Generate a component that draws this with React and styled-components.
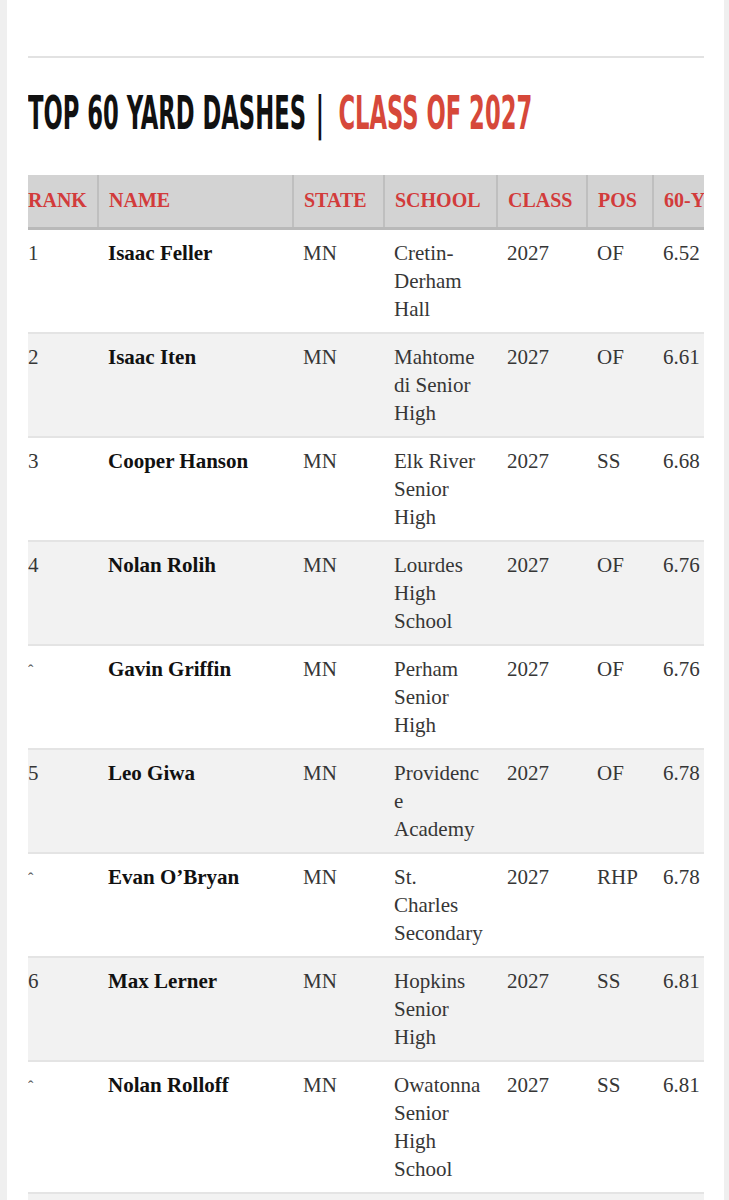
import styled, { createGlobalStyle } from "styled-components";

const GlobalStyle = createGlobalStyle`
  html, body {
    margin: 0;
    padding: 0;
    background: #efefef;
  }
  body {
    font-family: "Liberation Serif", "DejaVu Serif", serif;
  }
`;

const Page = styled.div`
  display: flex;
  padding: 0 5px 0 7px;
  min-height: 1200px;
`;

const Card = styled.main`
  flex: 1;
  background: #ffffff;
  padding: 56px 20px 0 21px;
  overflow: hidden;
`;

const Rule = styled.hr`
  margin: 0;
  border: none;
  height: 2px;
  background: #e2e2e2;
`;

const Title = styled.h2`
  margin: 32px 0 39px;
  font-family: "Liberation Sans Narrow", "DejaVu Sans Condensed", "Liberation Sans", sans-serif;
  font-weight: 700;
  font-size: 46px;
  line-height: 46px;
  color: #111111;
  white-space: nowrap;
  transform: scaleX(0.548);
  transform-origin: left center;
`;

const Pipe = styled.span`
  display: inline-block;
  color: #111111;
  margin: 0 26px 0 18px;
  font-weight: 700;
`;

const Accent = styled.span`
  color: #d6483a;
`;

const TableScroll = styled.div`
  overflow: hidden;
  width: 100%;
`;

const Table = styled.table`
  border-collapse: collapse;
  table-layout: fixed;
  width: 790px;
`;

const Th = styled.th`
  box-sizing: border-box;
  width: ${(p) => p.$w}px;
  height: 53px;
  padding: 0 ${(p) => (p.$first ? "0" : "10px")};
  background: #d3d3d3;
  border-right: 2px solid #bfbfbf;
  border-bottom: 3px solid #b9b9b9;
  color: #d23b3b;
  font-size: 20px;
  font-weight: 700;
  text-align: left;
  white-space: nowrap;
  overflow: hidden;
  &:last-child {
    border-right: none;
  }
`;

const Row = styled.tr`
  background: #ffffff;
  border-bottom: 2px solid #e4e4e4;
  &:nth-child(even) {
    background: #f2f2f2;
  }
`;

const Td = styled.td`
  vertical-align: top;
  padding: 9px ${(p) => (p.$first ? "0" : "10px")} 9px;
  font-size: 21px;
  line-height: 28px;
  color: ${(p) => (p.$strong ? "#111111" : "#363636")};
  font-weight: ${(p) => (p.$strong ? 700 : 400)};
  white-space: nowrap;
`;

const Caret = styled.span`
  font-size: 16px;
  color: #555555;
`;

const Line = styled.span`
  display: block;
`;

const columns = [
  { label: "RANK", w: 70 },
  { label: "NAME", w: 195 },
  { label: "STATE", w: 91 },
  { label: "SCHOOL", w: 113 },
  { label: "CLASS", w: 90 },
  { label: "POS", w: 66 },
  { label: "60-YD", w: 165 },
];

const athletes = [
  { rank: "1", name: "Isaac Feller", school: ["Cretin-", "Derham", "Hall"], pos: "OF", time: "6.52 sec" },
  { rank: "2", name: "Isaac Iten", school: ["Mahtome", "di Senior", "High"], pos: "OF", time: "6.61 sec" },
  { rank: "3", name: "Cooper Hanson", school: ["Elk River", "Senior", "High"], pos: "SS", time: "6.68 sec" },
  { rank: "4", name: "Nolan Rolih", school: ["Lourdes", "High", "School"], pos: "OF", time: "6.76 sec" },
  { rank: "^", name: "Gavin Griffin", school: ["Perham", "Senior", "High"], pos: "OF", time: "6.76 sec" },
  { rank: "5", name: "Leo Giwa", school: ["Providenc", "e", "Academy"], pos: "OF", time: "6.78 sec" },
  { rank: "^", name: "Evan O’Bryan", school: ["St.", "Charles", "Secondary"], pos: "RHP", time: "6.78 sec" },
  { rank: "6", name: "Max Lerner", school: ["Hopkins", "Senior", "High"], pos: "SS", time: "6.81 sec" },
  { rank: "^", name: "Nolan Rolloff", school: ["Owatonna", "Senior", "High", "School"], pos: "SS", time: "6.81 sec" },
  { rank: "7", name: "", school: [""], pos: "", time: "" },
];

export default function App() {
  return (
    <>
      <GlobalStyle />
      <Page>
        <Card>
          <Rule />
          <Title>
            TOP 60 YARD DASHES<Pipe>|</Pipe>
            <Accent>CLASS OF 2027</Accent>
          </Title>
          <TableScroll>
            <Table>
              <thead>
                <tr>
                  {columns.map((c, i) => (
                    <Th key={c.label} $w={c.w} $first={i === 0}>
                      {c.label}
                    </Th>
                  ))}
                </tr>
              </thead>
              <tbody>
                {athletes.map((a, i) => (
                  <Row key={i}>
                    <Td $first>{a.rank === "^" ? <Caret>ˆ</Caret> : a.rank}</Td>
                    <Td $strong>{a.name}</Td>
                    <Td>{a.name ? "MN" : ""}</Td>
                    <Td>
                      {a.school.map((l, j) => (
                        <Line key={j}>{l}</Line>
                      ))}
                    </Td>
                    <Td>{a.name ? "2027" : ""}</Td>
                    <Td>{a.pos}</Td>
                    <Td>{a.time}</Td>
                  </Row>
                ))}
              </tbody>
            </Table>
          </TableScroll>
        </Card>
      </Page>
    </>
  );
}
